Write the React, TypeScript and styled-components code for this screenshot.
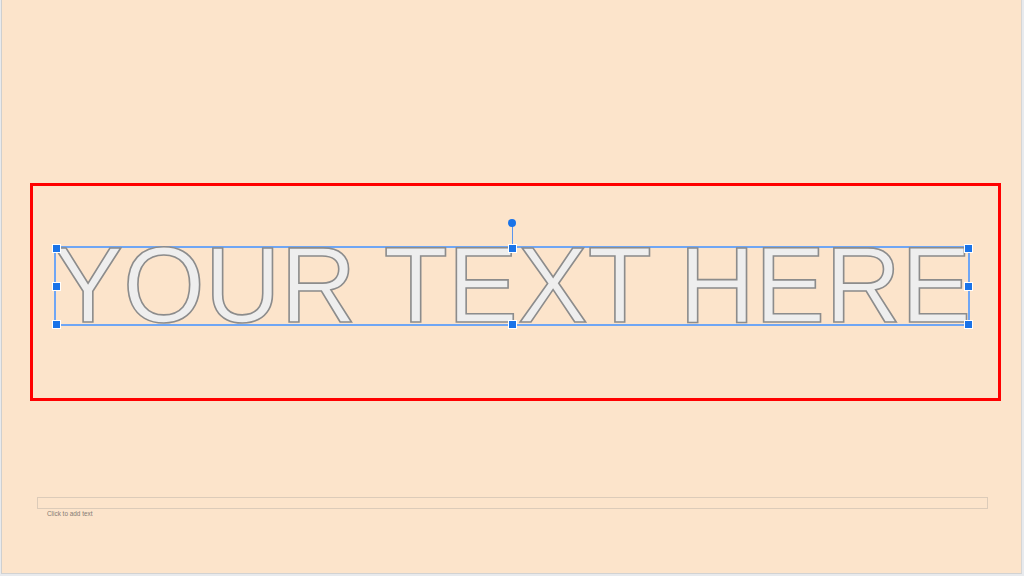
import React from 'react';
import styled, { createGlobalStyle } from 'styled-components';

const GlobalStyle = createGlobalStyle`
  html, body {
    margin: 0;
    padding: 0;
    background: #e8eaed;
    font-family: "Liberation Sans", Arial, sans-serif;
  }
`;

const Page = styled.div`
  width: 1024px;
  height: 576px;
  overflow: hidden;
  padding-left: 1px;
  box-sizing: border-box;
`;

const Slide = styled.div`
  width: 1021px;
  height: 574px;
  box-sizing: border-box;
  background: #fce4cb;
  border-left: 1px solid #cfcfcf;
  border-right: 1px solid #d6d6d6;
  border-bottom: 1px solid #d2d2d2;
  padding: 183px 0 0 28px;
  display: flex;
  flex-direction: column;
`;

const RedFrame = styled.div`
  width: 971px;
  height: 218px;
  box-sizing: border-box;
  border: 3px solid #ff0000;
  padding: 60px 0 0 21px;
`;

const TextBox = styled.div`
  position: relative;
  width: 916px;
  height: 80px;
  box-sizing: border-box;
  border: 2px solid #6fa6f5;
  display: flex;
  align-items: center;
  justify-content: center;
`;

const BigText = styled.span`
  font-family: "Liberation Sans", Arial, sans-serif;
  font-size: 105px;
  line-height: 76px;
  white-space: nowrap;
  color: #eeeeee;
  -webkit-text-stroke: 1.6px #8c8c8c;
  transform: scaleY(1.02);
  margin-top: -2px;
`;

const Handle = styled.span<{ $x: string; $y: string }>`
  position: absolute;
  left: ${({ $x }) => $x};
  top: ${({ $y }) => $y};
  width: 9px;
  height: 9px;
  margin: -4.5px 0 0 -4.5px;
  background: #1a73e8;
  border: 1px solid #ffffff;
  box-sizing: border-box;
`;

const RotateStem = styled.span`
  position: absolute;
  left: 50%;
  top: -25px;
  width: 1px;
  height: 24px;
  margin-left: -0.5px;
  background: #5b95ee;
`;

const RotateKnob = styled.span`
  position: absolute;
  left: 50%;
  top: -29px;
  width: 8px;
  height: 8px;
  margin-left: -4px;
  border-radius: 50%;
  background: #1a73e8;
`;

const Placeholder = styled.div`
  margin: 96px 0 0 7px;
  width: 951px;
  height: 12px;
  box-sizing: border-box;
  border: 1px solid #dccbb9;
`;

const PlaceholderHint = styled.div`
  margin: 1px 0 0 17px;
  font-size: 6.4px;
  color: #857b73;
  font-family: "Liberation Sans", Arial, sans-serif;
`;

const handles: [string, string][] = [
  ['0%', '0%'],
  ['50%', '0%'],
  ['100%', '0%'],
  ['0%', '50%'],
  ['100%', '50%'],
  ['0%', '100%'],
  ['50%', '100%'],
  ['100%', '100%'],
];

export default function App() {
  return (
    <Page>
      <GlobalStyle />
      <Slide>
        <RedFrame>
          <TextBox>
            <BigText>YOUR TEXT HERE</BigText>
            <RotateStem />
            <RotateKnob />
            {handles.map(([x, y]) => (
              <Handle key={x + y} $x={x} $y={y} />
            ))}
          </TextBox>
        </RedFrame>
        <Placeholder />
        <PlaceholderHint>Click to add text</PlaceholderHint>
      </Slide>
    </Page>
  );
}
